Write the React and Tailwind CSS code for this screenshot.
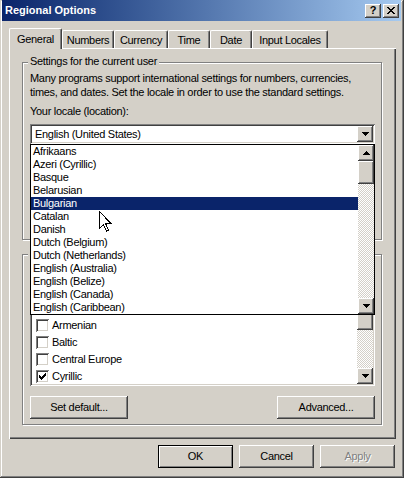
import React from 'react';

const raised =
  'shadow-[inset_-1px_-1px_#404040,inset_1px_1px_#fff,inset_-2px_-2px_#808080,inset_2px_2px_#d4d0c8]';
const sunken =
  'shadow-[inset_1px_1px_#808080,inset_-1px_-1px_#fff,inset_2px_2px_#404040,inset_-2px_-2px_#d4d0c8]';
const etched = 'border border-[#808080] shadow-[inset_1px_1px_#fff,1px_1px_#fff]';

const locales = [
  'Afrikaans',
  'Azeri (Cyrillic)',
  'Basque',
  'Belarusian',
  'Bulgarian',
  'Catalan',
  'Danish',
  'Dutch (Belgium)',
  'Dutch (Netherlands)',
  'English (Australia)',
  'English (Belize)',
  'English (Canada)',
  'English (Caribbean)',
];

// rows of the code-page list that show below the open drop-down
const languages = [
  { name: 'Armenian', on: false },
  { name: 'Baltic', on: false },
  { name: 'Central Europe', on: false },
  { name: 'Cyrillic', on: true },
];

const tabs = [
  { label: 'General', w: 'w-[53px]', active: true },
  { label: 'Numbers', w: 'w-[52px]' },
  { label: 'Currency', w: 'w-[54px]' },
  { label: 'Time', w: 'w-[42px]' },
  { label: 'Date', w: 'w-[42px]' },
  { label: 'Input Locales', w: 'w-[76px]' },
];

function Arrow({ up }) {
  return (
    <svg width="7" height="4" viewBox="0 0 7 4" className={up ? 'rotate-180' : ''} shapeRendering="crispEdges">
      <path d="M0 0H7V1H6V2H5V3H4V4H3V3H2V2H1V1H0Z" fill="#000" />
    </svg>
  );
}

function ArrowBtn({ up }) {
  return (
    <div className={`flex h-[16px] w-[16px] shrink-0 items-center justify-center bg-[#d4d0c8] ${raised}`}>
      <Arrow up={up} />
    </div>
  );
}

function ScrollBar({ thumb }) {
  return (
    <div className="flex w-[16px] shrink-0 flex-col">
      <ArrowBtn up />
      <div className={`${thumb} shrink-0 bg-[#d4d0c8] ${raised}`} />
      <div className="flex-1 bg-[conic-gradient(#d4d0c8_25%,#fff_0_50%,#d4d0c8_0_75%,#fff_0)] bg-[length:2px_2px]" />
      <ArrowBtn />
    </div>
  );
}

function Checkbox({ on }) {
  return (
    <div className={`flex h-[13px] w-[13px] shrink-0 items-center justify-center bg-white ${sunken}`}>
      {on && (
        <svg width="7" height="7" viewBox="0 0 7 7" shapeRendering="crispEdges">
          <path d="M6 0H7V3H6V4H5V5H4V6H3V7H2V6H1V5H0V2H1V3H2V4H3V3H4V2H5V1H6Z" fill="#000" />
        </svg>
      )}
    </div>
  );
}

function Button({ children, className = '', disabled, isDefault }) {
  return (
    <div
      className={`flex h-[23px] items-center justify-center bg-[#d4d0c8] ${
        isDefault ? 'border border-black shadow-[inset_1px_1px_#fff,inset_-1px_-1px_#808080]' : raised
      } ${disabled ? 'text-[#808080] [text-shadow:1px_1px_#fff]' : ''} ${className}`}
    >
      {children}
    </div>
  );
}

export default function App() {
  return (
    <div className="relative h-[478px] w-[404px] bg-[#d4d0c8] pl-[2px] pr-[3px] font-['Liberation_Sans',Arial,sans-serif] text-[11px] leading-[13px] tracking-[-0.3px] text-black shadow-[inset_-1px_-1px_#404040,inset_1px_1px_#d4d0c8,inset_-2px_-2px_#808080,inset_2px_2px_#fff]">
      {/* title bar */}
      <div className="flex h-[21px] items-center justify-between bg-linear-to-r from-[#0a246a] to-[#a6caf0] pl-[3px] pr-[2px]">
        <span className="font-bold tracking-normal text-white">Regional Options</span>
        <div className="flex gap-[2px]">
          <div className={`flex h-[14px] w-[16px] items-center justify-center bg-[#d4d0c8] text-[11px] font-bold ${raised}`}>
            ?
          </div>
          <div className={`flex h-[14px] w-[16px] items-center justify-center bg-[#d4d0c8] ${raised}`}>
            <svg width="8" height="7" viewBox="0 0 8 7" shapeRendering="crispEdges">
              <path
                d="M0 0H2V1H3V2H5V1H6V0H8V1H7V2H6V3H5V4H6V5H7V6H8V7H6V6H5V5H3V6H2V7H0V6H1V5H2V4H3V3H2V2H1V1H0Z"
                fill="#000"
              />
            </svg>
          </div>
        </div>
      </div>

      <div className="pl-[7px] pt-[7px]">
        {/* tabs */}
        <div className="flex h-[20px] items-end">
          {tabs.map((t) =>
            t.active ? (
              <div
                key={t.label}
                className={`${t.w} relative z-10 -mb-px flex h-[21px] items-center justify-center rounded-t-[2px] border-l border-t border-r border-white border-r-[#404040] bg-[#d4d0c8] shadow-[inset_-1px_0_#808080]`}
              >
                {t.label}
              </div>
            ) : (
              <div
                key={t.label}
                className={`${t.w} flex h-[18px] items-center justify-center rounded-t-[2px] border-l border-t border-r border-white border-r-[#404040] pt-[2px] shadow-[inset_-1px_0_#808080]`}
              >
                {t.label}
              </div>
            )
          )}
        </div>

        {/* tab panel */}
        <div className="h-[391px] w-[387px] pl-[13px] pt-[14px] shadow-[inset_1px_1px_#fff,inset_-1px_-1px_#404040,inset_-2px_-2px_#808080]">
          <div className={`h-[178px] w-[360px] pl-[7px] pr-[6px] ${etched}`}>
            <div className="-ml-[2px] -mt-[8px] w-fit bg-[#d4d0c8] px-[2px]">Settings for the current user</div>
            <p className="mt-[3px] leading-[14px]">
              Many programs support international settings for numbers, currencies,
              <br />
              times, and dates. Set the locale in order to use the standard settings.
            </p>
            <div className="mt-[6px]">Your locale (location):</div>
            <div className="relative mt-[6px]">
              <div className={`flex h-[20px] items-center bg-white p-[2px] ${sunken}`}>
                <span className="flex-1 pl-[3px]">English (United States)</span>
                <ArrowBtn />
              </div>
              {/* open drop-down */}
              <div className="absolute left-0 top-full z-20 flex h-[171px] w-full border border-black bg-white">
                <div className="flex-1">
                  {locales.map((l) => (
                    <div
                      key={l}
                      className={`h-[13px] pl-[2px] ${l === 'Bulgarian' ? 'bg-[#0a246a] text-white' : ''}`}
                    >
                      {l}
                    </div>
                  ))}
                </div>
                <ScrollBar thumb="h-[23px]" />
              </div>
            </div>
          </div>

          {/* second group: its caption and text sit under the drop-down */}
          <div className={`mt-[14px] h-[171px] w-[360px] pl-[7px] pr-[6px] ${etched}`}>
            <div className="-ml-[2px] -mt-[8px] h-[13px] w-[40px] bg-[#d4d0c8]" />
            <div className="h-[36px]" />
            <div className={`flex h-[90px] bg-white p-[2px] ${sunken}`}>
              <div className="flex-1 overflow-hidden pl-[4px] pt-[19px]">
                {languages.map((lang) => (
                  <div key={lang.name} className="flex h-[17px] items-center gap-[3px]">
                    <Checkbox on={lang.on} />
                    <span>{lang.name}</span>
                  </div>
                ))}
              </div>
              <ScrollBar thumb="h-[16px]" />
            </div>
            <div className="mt-[10px] flex justify-between">
              <Button className="w-[98px]">Set default...</Button>
              <Button className="w-[98px]">Advanced...</Button>
            </div>
          </div>
        </div>

        {/* dialog buttons */}
        <div className="mt-[6px] flex w-[387px] justify-end gap-[6px] pr-[1px]">
          <Button className="w-[75px]" isDefault>
            OK
          </Button>
          <Button className="w-[75px]">Cancel</Button>
          <Button className="w-[75px]" disabled>
            Apply
          </Button>
        </div>
      </div>

      {/* mouse pointer */}
      <svg
        className="absolute left-[99px] top-[211px] z-30"
        width="13"
        height="21"
        viewBox="0 0 13 21"
        shapeRendering="crispEdges"
      >
        <path d="M0.5 0.5V17.5L4.5 13.5L7.5 20L9.5 19L6.5 12.5H12L0.5 0.5Z" fill="#fff" stroke="#000" strokeWidth="1" />
      </svg>
    </div>
  );
}
